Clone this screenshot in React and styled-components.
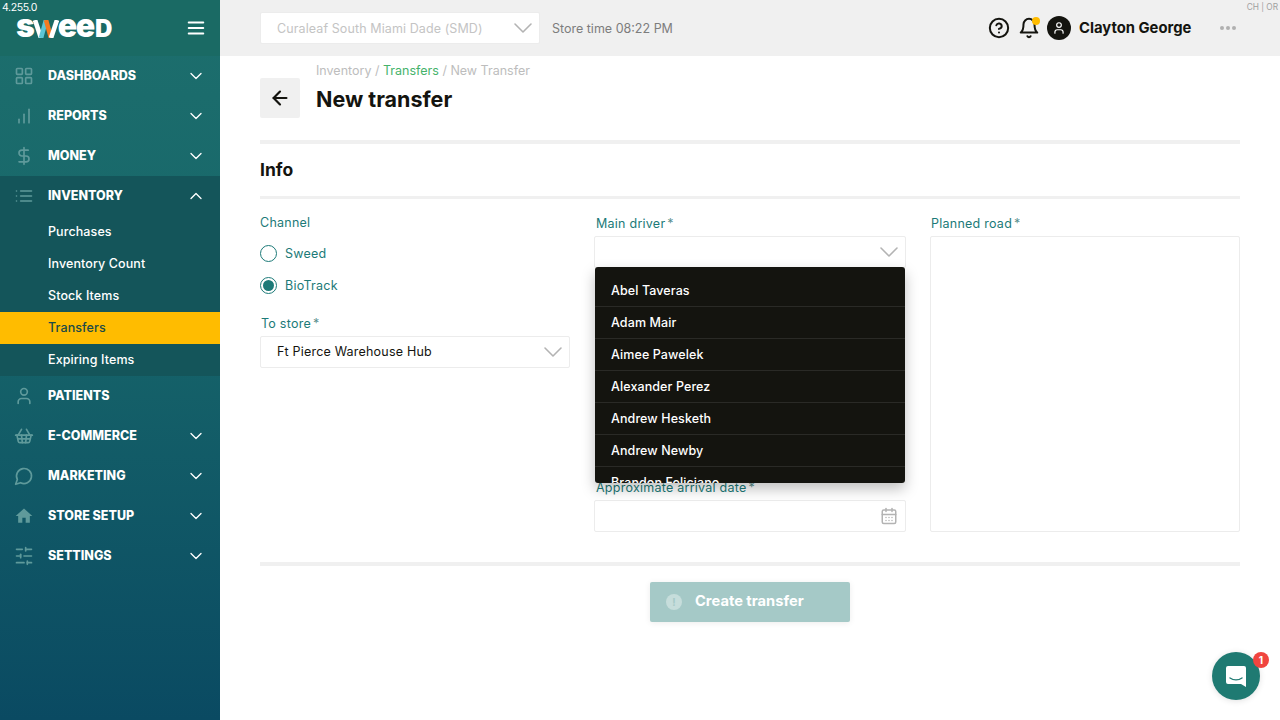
import React from 'react';
import styled, { createGlobalStyle } from 'styled-components';
import {
  LuLayoutGrid,
  LuChartNoAxesColumnIncreasing,
  LuDollarSign,
  LuList,
  LuUser,
  LuShoppingBasket,
  LuMessageCircle,
  LuSlidersHorizontal,
  LuChevronDown,
  LuChevronUp,
  LuMenu,
  LuArrowLeft,
  LuCircleHelp,
  LuBell,
  LuCalendarDays,
} from 'react-icons/lu';
import { MdHome } from 'react-icons/md';

const GlobalStyle = createGlobalStyle`
  html, body { margin: 0; padding: 0; height: 100%; }
  body { font-family: Inter, "Noto Sans", sans-serif; background: #fff; overflow: hidden; }
  * { box-sizing: border-box; }
`;

const Page = styled.div`
  display: flex;
  width: 1280px;
  height: 720px;
  position: relative;
`;

const Sidebar = styled.aside`
  width: 220px;
  flex-shrink: 0;
  background: linear-gradient(180deg, #1d6f6d 0%, #17666a 40%, #0a4a62 100%);
  display: flex;
  flex-direction: column;
  position: relative;
`;

const Version = styled.div`
  position: absolute;
  top: 1px;
  left: 2px;
  font-size: 10.5px;
  letter-spacing: -0.4px;
  color: #fff;
`;

const Brand = styled.div`
  height: 56px;
  padding: 0 16px;
  background: #1a6a64;
  display: flex;
  align-items: center;
  justify-content: space-between;
  color: #fff;
`;

const Logo = styled.div`
  display: flex;
  align-items: baseline;
  font-weight: 900;
  font-size: 32px;
  line-height: 24px;
  height: 24px;
  color: #fff;
  letter-spacing: -1.2px;
  margin-top: -4px;
`;

const LogoCap = styled.span`
  font-size: 24px;
  letter-spacing: 0;
  margin-left: 1px;
`;

const LogoW = styled.svg`
  align-self: center;
  margin: 6px -1px 0 -1px;
`;

const BurgerWrap = styled.span`
  display: flex;
  margin: 0 -3px 0 0;
  font-size: 22px;
`;

const NavRow = styled.div`
  height: 40px;
  display: flex;
  align-items: center;
  padding: 0 16px;
  background: ${(p) => (p.$open ? '#14555a' : 'transparent')};
  color: #fff;
`;

const NavIcon = styled.span`
  width: 20px;
  flex-shrink: 0;
  display: flex;
  justify-content: center;
  font-size: ${(p) => p.$size || 20}px;
  color: #5f9a9b;
  margin: 0 14px 0 -2px;
`;

const NavLabel = styled.span`
  flex: 1;
  font-size: 12.5px;
  font-weight: 800;
  padding-bottom: 2px;
`;

const NavArrow = styled.span`
  display: flex;
  font-size: 20px;
  margin-right: -2px;
  & svg {
    stroke-width: 1.6;
  }
`;

const SubList = styled.div`
  background: #14555a;
`;

const SubItem = styled.div`
  height: 32px;
  display: flex;
  align-items: center;
  padding: 0 0 2px 48px;
  font-size: 12.5px;
  font-weight: 500;
  letter-spacing: 0.1px;
  color: ${(p) => (p.$active ? '#1a4a48' : '#fff')};
  background: ${(p) => (p.$active ? '#ffbc00' : 'transparent')};
`;

const Main = styled.main`
  flex: 1;
  display: flex;
  flex-direction: column;
  min-width: 0;
`;

const TopBar = styled.header`
  height: 56px;
  background: #f0f0f0;
  padding: 0 40px;
  display: flex;
  align-items: center;
  position: relative;
`;

const StoreSelect = styled.div`
  width: 280px;
  height: 32px;
  background: #fff;
  border: 1px solid #ececec;
  border-radius: 2px;
  display: flex;
  align-items: center;
  justify-content: space-between;
  padding: 0 0 0 16px;
  font-size: 12.5px;
  letter-spacing: 0.1px;
  color: #c4c4c4;
`;

const Chevron = styled(LuChevronDown)`
  font-size: 32px;
  color: #b3b3b3;
  stroke-width: 1.2;
  margin: -4px 0;
`;

const StoreTime = styled.span`
  margin-left: 12px;
  font-size: 12.5px;
  color: #7d7d7d;
`;

const UserArea = styled.div`
  margin-left: auto;
  display: flex;
  align-items: center;
  color: #14140f;
`;

const HeaderIcon = styled.span`
  display: flex;
  position: relative;
  font-size: 22px;
  margin-right: 8px;
  & svg {
    stroke-width: 2.2;
  }
`;

const BellDot = styled.span`
  position: absolute;
  top: 0;
  right: 0;
  width: 8px;
  height: 8px;
  border-radius: 50%;
  background: #ffbc00;
`;

const Avatar = styled.span`
  width: 24px;
  height: 24px;
  border-radius: 50%;
  background: #14140f;
  color: #fff;
  display: flex;
  align-items: center;
  justify-content: center;
  font-size: 14px;
  margin: 0 8px 0 -1px;
`;

const UserName = styled.span`
  font-size: 14.8px;
  font-weight: 700;
  width: 114px;
  padding-bottom: 1px;
  white-space: nowrap;
`;

const Dots = styled.span`
  display: flex;
  gap: 2px;
  margin-left: 27px;
  margin-right: 4px;
`;

const Dot = styled.i`
  width: 4px;
  height: 4px;
  border-radius: 50%;
  background: #b0b0b0;
`;

const Locale = styled.span`
  position: absolute;
  top: 2px;
  right: 2px;
  font-size: 8.3px;
  color: #a0a0a0;
`;

const Content = styled.div`
  padding: 7px 40px 0;
  display: flex;
  flex-direction: column;
`;

const TitleRow = styled.div`
  display: flex;
  gap: 16px;
  height: 77px;
`;

const BackButton = styled.div`
  width: 40px;
  height: 40px;
  margin-top: 15px;
  background: #f0f0f0;
  border-radius: 2px;
  display: flex;
  align-items: center;
  justify-content: center;
  font-size: 22px;
  color: #14140f;
  & svg {
    stroke-width: 2.4;
  }
`;

const Crumbs = styled.div`
  font-size: 12.5px;
  line-height: 16px;
  color: #bdbdbd;
`;

const CrumbLink = styled.span`
  color: #45b36b;
`;

const PageTitle = styled.h1`
  margin: 7px 0 0;
  font-size: 21.5px;
  line-height: 26px;
  font-weight: 700;
  color: #14140f;
`;

const Divider = styled.div`
  height: ${(p) => p.$h || 4}px;
  background: #f0f0f0;
`;

const SectionTitle = styled.h2`
  margin: 0;
  height: 52px;
  display: flex;
  align-items: center;
  padding-bottom: 2px;
  font-size: 17.5px;
  font-weight: 700;
  color: #14140f;
`;

const FormGrid = styled.div`
  display: grid;
  grid-template-columns: 310px 312px 310px;
  column-gap: 24px;
  height: 363px;
  padding-top: 15px;
`;

const Column = styled.div`
  display: flex;
  flex-direction: column;
  position: relative;
`;

const Label = styled.label`
  display: block;
  height: 16px;
  line-height: 16px;
  font-size: 12.5px;
  letter-spacing: 0.25px;
  color: #1c7a78;
  padding-left: ${(p) => p.$pl || 0}px;
  margin: ${(p) => p.$mt || 0}px 0 ${(p) => p.$mb || 5}px;
`;

const Required = styled.span`
  margin-left: 2px;
  color: #5a8f8e;
`;

const Radio = styled.div`
  display: flex;
  align-items: center;
  gap: 8px;
  height: 32px;
  font-size: 12.5px;
  letter-spacing: 0.25px;
  color: #1c7a78;
`;

const RadioMark = styled.span`
  width: 17px;
  height: 17px;
  border-radius: 50%;
  border: 1px solid #1c7a78;
  display: flex;
  align-items: center;
  justify-content: center;
  &::after {
    content: '';
    width: 11px;
    height: 11px;
    border-radius: 50%;
    background: ${(p) => (p.$checked ? '#1c7a78' : 'transparent')};
  }
`;

const Field = styled.div`
  height: 32px;
  border: 1px solid #ececec;
  border-radius: 2px;
  background: #fff;
  display: flex;
  align-items: center;
  justify-content: space-between;
  padding: 0 0 1px 16px;
  font-size: 12.5px;
  letter-spacing: 0.2px;
  color: #14140f;
`;

const TextArea = styled.div`
  height: 296px;
  border: 1px solid #ececec;
  border-radius: 2px;
`;

const CalendarIcon = styled(LuCalendarDays)`
  font-size: 18px;
  color: #b3b3b3;
  margin-right: 7px;
`;

const Menu = styled.div`
  position: absolute;
  top: 53px;
  left: 1px;
  right: 1px;
  height: 216px;
  overflow: hidden;
  background: #14140f;
  border-radius: 3px;
  padding-top: 8px;
  box-shadow: 0 6px 14px rgba(0, 0, 0, 0.25);
  z-index: 2;
`;

const MenuItem = styled.div`
  height: 32px;
  display: flex;
  align-items: center;
  padding-left: 16px;
  font-size: 12.5px;
  font-weight: 500;
  letter-spacing: 0.1px;
  color: #fff;
  border-bottom: 1px solid #2a2a26;
`;

const Actions = styled.div`
  display: flex;
  justify-content: center;
  padding-top: 16px;
`;

const CreateButton = styled.div`
  width: 200px;
  height: 40px;
  background: #a5c9c7;
  border-radius: 2px;
  display: flex;
  align-items: center;
  gap: 13px;
  padding: 0 0 3px 16px;
  font-size: 14.7px;
  font-weight: 700;
  color: #fff;
  box-shadow: 0 1px 6px rgba(0, 0, 0, 0.08);
`;

const InfoDot = styled.span`
  width: 16px;
  height: 16px;
  margin-top: 3px;
  border-radius: 50%;
  background: #c6dddb;
  color: #a5c9c7;
  font-size: 10px;
  display: flex;
  align-items: center;
  justify-content: center;
`;

const ChatBubble = styled.div`
  position: absolute;
  left: 1212px;
  top: 652px;
  width: 48px;
  height: 48px;
  border-radius: 50%;
  background: #1f7a72;
  display: flex;
  align-items: center;
  justify-content: center;
  box-shadow: 0 1px 6px rgba(0, 0, 0, 0.12);
`;

const ChatBadge = styled.span`
  position: absolute;
  top: 0;
  right: -9px;
  width: 16px;
  height: 16px;
  border-radius: 50%;
  background: #f0453f;
  color: #fff;
  font-size: 10px;
  font-weight: 700;
  display: flex;
  align-items: center;
  justify-content: center;
`;

const navTop = [
  { label: 'DASHBOARDS', icon: <LuLayoutGrid />, arrow: true },
  { label: 'REPORTS', icon: <LuChartNoAxesColumnIncreasing />, arrow: true },
  { label: 'MONEY', icon: <LuDollarSign />, arrow: true },
];

const navBottom = [
  { label: 'PATIENTS', icon: <LuUser /> },
  { label: 'E-COMMERCE', icon: <LuShoppingBasket />, arrow: true },
  { label: 'MARKETING', icon: <LuMessageCircle />, arrow: true },
  { label: 'STORE SETUP', icon: <MdHome />, size: 24, arrow: true },
  { label: 'SETTINGS', icon: <LuSlidersHorizontal />, arrow: true },
];

const subItems = ['Purchases', 'Inventory Count', 'Stock Items', 'Transfers', 'Expiring Items'];

const drivers = [
  'Abel Taveras',
  'Adam Mair',
  'Aimee Pawelek',
  'Alexander Perez',
  'Andrew Hesketh',
  'Andrew Newby',
  'Brandon Feliciano',
];

function NavItem({ item }) {
  return (
    <NavRow>
      <NavIcon $size={item.size}>{item.icon}</NavIcon>
      <NavLabel>{item.label}</NavLabel>
      {item.arrow && (
        <NavArrow>
          <LuChevronDown />
        </NavArrow>
      )}
    </NavRow>
  );
}

function LogoMark() {
  return (
    <Logo>
      <span>s</span>
      <LogoW width="26" height="18" viewBox="0 0 26 18">
        <path d="M2 0 L8 18" stroke="#fff" strokeWidth="4.6" fill="none" />
        <path d="M8 18 L13 0" stroke="#5cc6d6" strokeWidth="4.6" fill="none" />
        <path d="M13 0 L18 18" stroke="#f47a20" strokeWidth="4.6" fill="none" />
        <path d="M18 18 L24 0" stroke="#fff" strokeWidth="4.6" fill="none" />
      </LogoW>
      <span>ee</span>
      <LogoCap>D</LogoCap>
    </Logo>
  );
}

export default function App() {
  return (
    <Page>
      <GlobalStyle />
      <Sidebar>
        <Version>4.255.0</Version>
        <Brand>
          <LogoMark />
          <BurgerWrap>
            <LuMenu />
          </BurgerWrap>
        </Brand>
        {navTop.map((item) => (
          <NavItem key={item.label} item={item} />
        ))}
        <NavRow $open>
          <NavIcon>
            <LuList />
          </NavIcon>
          <NavLabel>INVENTORY</NavLabel>
          <NavArrow>
            <LuChevronUp />
          </NavArrow>
        </NavRow>
        <SubList>
          {subItems.map((name) => (
            <SubItem key={name} $active={name === 'Transfers'}>
              {name}
            </SubItem>
          ))}
        </SubList>
        {navBottom.map((item) => (
          <NavItem key={item.label} item={item} />
        ))}
      </Sidebar>

      <Main>
        <TopBar>
          <StoreSelect>
            Curaleaf South Miami Dade (SMD)
            <Chevron />
          </StoreSelect>
          <StoreTime>Store time 08:22 PM</StoreTime>
          <UserArea>
            <HeaderIcon>
              <LuCircleHelp />
            </HeaderIcon>
            <HeaderIcon>
              <LuBell />
              <BellDot />
            </HeaderIcon>
            <Avatar>
              <LuUser />
            </Avatar>
            <UserName>Clayton George</UserName>
            <Dots>
              <Dot />
              <Dot />
              <Dot />
            </Dots>
          </UserArea>
          <Locale>CH | OR</Locale>
        </TopBar>

        <Content>
          <TitleRow>
            <BackButton>
              <LuArrowLeft />
            </BackButton>
            <div>
              <Crumbs>
                Inventory / <CrumbLink>Transfers</CrumbLink> / New Transfer
              </Crumbs>
              <PageTitle>New transfer</PageTitle>
            </div>
          </TitleRow>
          <Divider />
          <SectionTitle>Info</SectionTitle>
          <Divider $h={3} />
          <FormGrid>
            <Column>
              <Label $mt={1} $mb={6}>Channel</Label>
              <Radio>
                <RadioMark />
                Sweed
              </Radio>
              <Radio>
                <RadioMark $checked />
                BioTrack
              </Radio>
              <Label $mt={15} $mb={4} $pl={1}>
                To store<Required>*</Required>
              </Label>
              <Field>
                Ft Pierce Warehouse Hub
                <Chevron />
              </Field>
            </Column>
            <Column>
              <Label $mt={2} $mb={4} $pl={2}>
                Main driver<Required>*</Required>
              </Label>
              <Field>
                <span />
                <Chevron />
              </Field>
              <Menu>
                {drivers.map((name) => (
                  <MenuItem key={name}>{name}</MenuItem>
                ))}
              </Menu>
              <Label $mt={212} $mb={4} $pl={2}>
                Approximate arrival date<Required>*</Required>
              </Label>
              <Field>
                <span />
                <CalendarIcon />
              </Field>
            </Column>
            <Column>
              <Label $mt={2} $mb={4} $pl={1}>
                Planned road<Required>*</Required>
              </Label>
              <TextArea />
            </Column>
          </FormGrid>
          <Divider />
          <Actions>
            <CreateButton>
              <InfoDot>!</InfoDot>
              Create transfer
            </CreateButton>
          </Actions>
        </Content>
      </Main>

      <ChatBubble>
        <svg width="24" height="24" viewBox="0 0 24 24">
          <path
            d="M4 2h16a2 2 0 0 1 2 2v19l-5-3H4a2 2 0 0 1-2-2V4a2 2 0 0 1 2-2z"
            fill="#fff"
          />
          <path d="M6 14c3.5 2.4 8.5 2.4 12 0" stroke="#1f7a72" strokeWidth="1.4" fill="none" strokeLinecap="round" />
        </svg>
        <ChatBadge>1</ChatBadge>
      </ChatBubble>
    </Page>
  );
}
